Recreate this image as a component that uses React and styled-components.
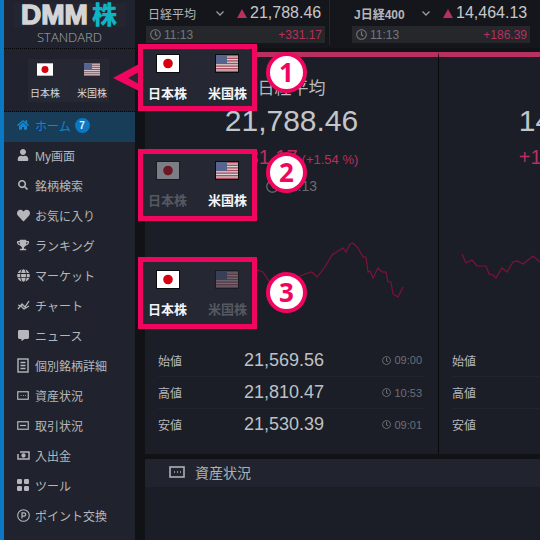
import React from "react";
import styled, { createGlobalStyle } from "styled-components";
import { FaHome, FaUser, FaSearch, FaHeart, FaTrophy, FaGlobe, FaCommentAlt, FaRegClock } from "react-icons/fa";

const FONT = `"Liberation Sans", "Noto Sans CJK JP", sans-serif`;
const PINK = "#f1065f";

const Global = createGlobalStyle`
  html, body { margin: 0; padding: 0; background: #111216; }
  * { box-sizing: border-box; }
`;

const Page = styled.div`
  position: relative; width: 540px; height: 540px; overflow: hidden; display: flex;
  font-family: ${FONT}; color: #b9bbc0; background: #111216;
`;
const Sidebar = styled.aside`
  width: 135px; flex: none; border-left: 4px solid #0a78c2; background: #20232d;
  display: flex; flex-direction: column;
`;
const Logo = styled.div`
  height: 49px; border-bottom: 1px dotted #050505; display: flex; flex-direction: column; align-items: center;
`;
const LogoMark = styled.div`
  margin-top: 3px; width: 112px; height: 24px; background: #232630; display: flex; align-items: center; justify-content: center; gap: 4px; padding-right: 1px;
`;
const Dmm = styled.span`
  font: 700 28px/24px ${FONT}; letter-spacing: 0; color: #d4d4d6; -webkit-text-stroke: 1.4px #d4d4d6;
`;
const Kabu = styled.span`
  font: 900 25px/24px ${FONT}; color: #10b3c4;
`;
const Standard = styled.div`
  font: 300 13px/14px "Open Sans", ${FONT}; color: #a7a9ae; margin-top: 3px; letter-spacing: 0;
`;
const SwitchWrap = styled.div`
  height: 63px; border-bottom: 1px dotted #050505; display: flex; align-items: center; justify-content: center; padding-right: 2px;
`;
const MiniSwitch = styled.div`
  width: 81px; height: 43px; background: #252833; display: flex; justify-content: space-between; padding: 4px 2px 0;
`;
const MiniMarket = styled.div`
  display: flex; flex-direction: column; align-items: center; gap: 12px;
  font: 400 10px/12px ${FONT}; color: #d6d7da;
`;
const Nav = styled.nav`
  display: flex; flex-direction: column;
`;
const NavItem = styled.div`
  height: 30px; display: flex; align-items: center; gap: 5px; padding: 0 0 4px 12px;
  font-size: 12px; color: ${p => (p.$active ? "#1584cc" : "#b5b7bc")};
  background: ${p => (p.$active ? "#183d59" : "transparent")};
  svg { flex: none; }
`;
const NavIcon = styled.span`
  width: 14px; height: 14px; display: flex; align-items: center; justify-content: center; color: ${p => (p.$active ? "#1584cc" : "#b5b7bc")};
`;
const Badge = styled.span`
  width: 15px; height: 15px; border-radius: 50%; background: #0a78c2; color: #e8f2fa;
  font: 700 10px/15px ${FONT}; text-align: center; margin-left: -1px;
`;
const Main = styled.main`
  flex: 1; min-width: 0; display: flex; flex-direction: column;
`;
const TopBar = styled.header`
  height: 48px; flex: none; display: flex; background: #15161b;
`;
const Ticker = styled.div`
  flex: none; width: ${p => p.$w}px; padding-left: ${p => p.$pl}px; padding-right: ${p => p.$pr}px;
  border-right: ${p => (p.$sep ? "1px solid #25272d" : "none")};
  margin-bottom: 3px;
`;
const TickerHead = styled.div`
  height: 26px; display: flex; align-items: center;
`;
const TickerName = styled.span`
  width: 70px; padding-left: 2px; font-size: 12px; color: #b5b6ba; font-weight: ${p => (p.$bold ? 700 : 400)};
`;
const Chevron = styled.svg`
  width: 8px; height: 5px; margin-right: 13px;
`;
const Triangle = styled.span`
  width: 0; height: 0; border-left: 5.5px solid transparent; border-right: 5.5px solid transparent; border-bottom: 9px solid #b8305f; margin-right: 3px;
`;
const TickerValue = styled.span`
  font-size: 16px; color: #c6c7ca;
`;
const TickerFoot = styled.div`
  height: 17px; background: #25272b; display: flex; align-items: center; justify-content: space-between; padding: 0 3px 0 4px; font-size: 12px;
`;
const TickerTime = styled.span`
  display: flex; align-items: center; gap: 3px; color: #74777d;
`;
const TickerChange = styled.span`
  color: #b8305f;
`;
const Content = styled.div`
  flex: 1; min-height: 0; margin-left: 10px; margin-top: 4px; display: flex; flex-direction: column; background: #1b1e26; overflow: hidden;
`;
const Panels = styled.div`
  height: 402px; flex: none; display: flex; 
`;
const Panel = styled.section`
  flex: none; width: 294px; border-right: 1px solid #08090b; border-top: 5px solid #b8305f; display: flex; flex-direction: column; align-items: stretch; padding: 0 13px;
`;
const PanelTitle = styled.div`
  margin-top: 22px; height: 20px; text-align: center; font: 400 17px/20px ${FONT}; color: #b7b9bd;
`;
const BigValue = styled.div`
  margin-top: 4px; height: 36px; text-align: center; font: 400 30px/36px ${FONT}; color: #c3c5c9;
`;
const ChangeLine = styled.div`
  margin-top: 5px; height: 26px; text-align: center; font: 400 20px/26px ${FONT}; color: #b8305f;
  small { font-size: 13px; margin-left: 4px; }
`;
const ClockLine = styled.div`
  margin-top: 7px; height: 18px; display: flex; justify-content: center; align-items: center; gap: 4px; font-size: 14px; color: #696c73;
`;
const Chart = styled.svg`
  display: block; width: 294px; height: 70px; margin: 40px 0 0 -13px; flex: none;
`;
const Table = styled.div`
  margin-top: 39px;
`;
const Row = styled.div`
  height: 32px; display: grid; grid-template-columns: ${p => p.$col}px 1fr auto; align-items: center;
  border-top: ${p => (p.$first ? "none" : "1px solid #21242c")};
`;
const RowLabel = styled.span`
  font-size: 12px; color: #b5b7bc;
`;
const RowValue = styled.span`
  font-size: 18px; color: #bfc1c5;
`;
const RowTime = styled.span`
  display: flex; align-items: center; gap: 3px; font-size: 11px; color: #6d7077; padding-right: 3px;
`;
const Gap = styled.div`
  height: 5px; flex: none; background: #111216;
`;
const SectionHead = styled.div`
  height: 28px; flex: none; background: #21242e; display: flex; align-items: center; gap: 10px; padding: 0 0 2px 24px; font-size: 14px; color: #aeb0b6;
`;
const Callout = styled.div`
  position: absolute; left: 138px; top: ${p => p.$y}px; width: 119px; height: ${p => p.$h}px; border: 5px solid ${PINK}; background: #252833;
  display: flex; justify-content: space-between; padding: ${p => p.$pt}px 5px 0;
`;
const CalloutMarket = styled.div`
  display: flex; flex-direction: column; align-items: center; gap: 14px; font: 700 13px/16px ${FONT}; color: ${p => (p.$off ? "#565961" : "#f4f5f7")};
  svg { opacity: ${p => (p.$off ? 0.4 : 1)}; outline: 1px solid #0b0c10; }
`;
const Pointer = styled.svg`
  position: absolute; left: 113px; top: 64px; width: 26px; height: 28px;
`;
const Step = styled.div`
  position: absolute; left: 266px; top: ${p => p.$y}px; width: 41px; height: 41px; border-radius: 50%; border: 4px solid ${PINK}; background: #fff;
  color: ${PINK}; font: 700 26px/33px "Open Sans", ${FONT}; text-align: center;
`;

const JpFlag = ({ w = 22, h = 17 }) => (
  <svg width={w} height={h} viewBox="0 0 22 17" aria-hidden="true">
    <rect width="22" height="17" fill="#fff" />
    <circle cx="11" cy="8.5" r="4.8" fill="#d6000f" />
  </svg>
);
const UsFlag = ({ w = 22, h = 17 }) => (
  <svg width={w} height={h} viewBox="0 0 22 17" aria-hidden="true">
    <rect width="22" height="17" fill="#d8d4d8" />
    {[0, 2.6, 5.2, 7.8, 10.4, 13, 15.6].map(y => <rect key={y} y={y} width="22" height="1.4" fill="#a9505f" />)}
    <rect width="11" height="9" fill="#56648e" />
  </svg>
);
const Clock = ({ size }) => <FaRegClock size={size} />;
const Card = ({ size = 13, dots = true }) => (
  <svg width={size} height={size * 0.75} viewBox="0 0 16 12" fill="none" stroke="currentColor" strokeWidth="1.6" aria-hidden="true">
    <rect x="1" y="1" width="14" height="10" />
    {dots ? <path d="M5 6h1M8 6h1M11 6h1" /> : <path d="M4 6h8" />}
  </svg>
);
const DocIcon = () => (
  <svg width="12" height="15" viewBox="0 0 12 15" fill="none" stroke="currentColor" strokeWidth="1.4" aria-hidden="true">
    <rect x="1" y="1" width="10" height="13" /><path d="M3.5 4.5h5M3.5 7.5h5M3.5 10.5h5" />
  </svg>
);
const ChartIcon = () => (
  <svg width="13" height="12" viewBox="0 0 13 12" fill="none" stroke="currentColor" strokeWidth="1.3" aria-hidden="true">
    <path d="M1 10l4-5 3 3 4-6M1 6l3 1 3 3 5-3" />
  </svg>
);
const CashIcon = () => (
  <svg width="13" height="11" viewBox="0 0 13 11" fill="none" stroke="currentColor" strokeWidth="1.5" aria-hidden="true">
    <path d="M3 2h9v7H1V4" /><circle cx="6.5" cy="5.5" r="1.4" fill="currentColor" />
  </svg>
);
const ToolIcon = () => (
  <svg width="12" height="12" viewBox="0 0 12 12" fill="currentColor" aria-hidden="true">
    <rect width="5" height="5" rx="1.2" /><rect x="7" width="5" height="5" rx="1.2" /><rect y="7" width="5" height="5" rx="1.2" /><rect x="7" y="7" width="5" height="5" rx="1.2" />
  </svg>
);
const PointIcon = () => (
  <svg width="13" height="13" viewBox="0 0 13 13" fill="none" stroke="currentColor" aria-hidden="true">
    <circle cx="6.5" cy="6.5" r="5.8" strokeWidth="1.1" /><path d="M5 9.5V3.8h2a1.6 1.6 0 010 3.4H5" strokeWidth="1.2" />
  </svg>
);

const navItems = [
  ["ホーム", <FaHome size={12} />, true],
  ["My画面", <FaUser size={12} />],
  ["銘柄検索", <FaSearch size={10} />],
  ["お気に入り", <FaHeart size={13} />],
  ["ランキング", <FaTrophy size={12} />],
  ["マーケット", <FaGlobe size={13} />],
  ["チャート", <ChartIcon />],
  ["ニュース", <FaCommentAlt size={11} />],
  ["個別銘柄詳細", <DocIcon />],
  ["資産状況", <Card size={12} />],
  ["取引状況", <Card size={12} dots={false} />],
  ["入出金", <CashIcon />],
  ["ツール", <ToolIcon />],
  ["ポイント交換", <PointIcon />],
];

const line1 = [[257,270],[263,272],[270,283],[276,276],[284,272],[291,278],[298,277],[305,274],[312,272],[317,277],[325,267],[332,255],[335,253],[343,248],[346,252],[350,244],[353,243],[358,248],[363,257],[366,257],[368,272],[370,271],[373,278],[378,268],[382,272],[386,272],[388,282],[391,282],[393,294],[398,297],[403,287]];
const line2 = [[462,254],[466,263],[472,260],[477,266],[486,266],[489,274],[493,275],[496,278],[502,268],[507,272],[513,262],[517,261],[523,264],[533,256],[540,262],[548,258]];

const panels = [
  { title: "日経平均", value: "21,788.46", change: "+331.17", pct: "(+1.54 %)", line: line1, ox: 145, col: 86,
    rows: [["始値", "21,569.56", "09:00"], ["高値", "21,810.47", "10:53"], ["安値", "21,530.39", "09:01"]] },
  { title: "J日経400", value: "14,464.13", change: "+186.39", pct: "(+1.30 %)", line: line2, ox: 439, col: 90,
    rows: [["始値", "14,312.20", "09:00"], ["高値", "14,480.31", "10:53"], ["安値", "14,290.77", "09:01"]] },
];

const callouts = [
  { y: 44, h: 67, pt: 6, off: null, n: "1", sy: 52 },
  { y: 149, h: 72, pt: 8, off: "jp", n: "2", sy: 152 },
  { y: 257, h: 72, pt: 9, off: "us", n: "3", sy: 272 },
];

export default function App() {
  return (
    <Page>
      <Global />
      <Sidebar>
        <Logo>
          <LogoMark><Dmm>DMM</Dmm><Kabu>株</Kabu></LogoMark>
          <Standard>STANDARD</Standard>
        </Logo>
        <SwitchWrap>
          <MiniSwitch>
            <MiniMarket><JpFlag w={16} h={13} />日本株</MiniMarket>
            <MiniMarket><UsFlag w={16} h={13} />米国株</MiniMarket>
          </MiniSwitch>
        </SwitchWrap>
        <Nav>
          {navItems.map(([label, icon, active]) => (
            <NavItem key={label} $active={active}>
              <NavIcon $active={active}>{icon}</NavIcon>
              {label}
              {active && <Badge>7</Badge>}
            </NavItem>
          ))}
        </Nav>
      </Sidebar>
      <Main>
        <TopBar>
          <Ticker $sep $w={195} $pl={11} $pr={4}>
            <TickerHead>
              <TickerName>日経平均</TickerName>
              <Chevron viewBox="0 0 8 5" fill="none" stroke="#9a9ca1" strokeWidth="1.3"><path d="M.5.5L4 4 7.5.5" /></Chevron>
              <Triangle /><TickerValue>21,788.46</TickerValue>
            </TickerHead>
            <TickerFoot>
              <TickerTime><Clock size={11} />11:13</TickerTime>
              <TickerChange>+331.17</TickerChange>
            </TickerFoot>
          </Ticker>
          <Ticker $w={205} $pl={22} $pr={5}>
            <TickerHead>
              <TickerName $bold>J日経400</TickerName>
              <Chevron viewBox="0 0 8 5" fill="none" stroke="#9a9ca1" strokeWidth="1.3"><path d="M.5.5L4 4 7.5.5" /></Chevron>
              <Triangle /><TickerValue>14,464.13</TickerValue>
            </TickerHead>
            <TickerFoot>
              <TickerTime><Clock size={11} />11:13</TickerTime>
              <TickerChange>+186.39</TickerChange>
            </TickerFoot>
          </Ticker>
        </TopBar>
        <Content>
          <Panels>
            {panels.map(p => (
              <Panel key={p.title}>
                <PanelTitle>{p.title}</PanelTitle>
                <BigValue>{p.value}</BigValue>
                <ChangeLine>{p.change}<small>{p.pct}</small></ChangeLine>
                <ClockLine><Clock size={13} />11:13</ClockLine>
                <Chart viewBox="0 0 294 70">
                  <polyline fill="none" stroke="#7d1339" strokeWidth="1.2" points={p.line.map(([x, y]) => `${x - p.ox},${y - 235}`).join(" ")} />
                </Chart>
                <Table>
                  {p.rows.map(([l, v, t], i) => (
                    <Row key={l} $first={i === 0} $col={p.col}>
                      <RowLabel>{l}</RowLabel>
                      <RowValue>{v}</RowValue>
                      <RowTime><Clock size={9} />{t}</RowTime>
                    </Row>
                  ))}
                </Table>
              </Panel>
            ))}
          </Panels>
          <Gap />
          <SectionHead><Card size={16} />資産状況</SectionHead>
        </Content>
      </Main>
      <Pointer viewBox="0 0 26 28" aria-hidden="true">
        <polygon points="0,14 26,0 26,27" fill={PINK} />
        <polygon points="15,14 26,8 26,20" fill="#252833" />
      </Pointer>
      {callouts.map(c => (
        <React.Fragment key={c.n}>
          <Callout $y={c.y} $h={c.h} $pt={c.pt}>
            <CalloutMarket $off={c.off === "jp"}><JpFlag />日本株</CalloutMarket>
            <CalloutMarket $off={c.off === "us"}><UsFlag />米国株</CalloutMarket>
          </Callout>
          <Step $y={c.sy}>{c.n}</Step>
        </React.Fragment>
      ))}
    </Page>
  );
}
